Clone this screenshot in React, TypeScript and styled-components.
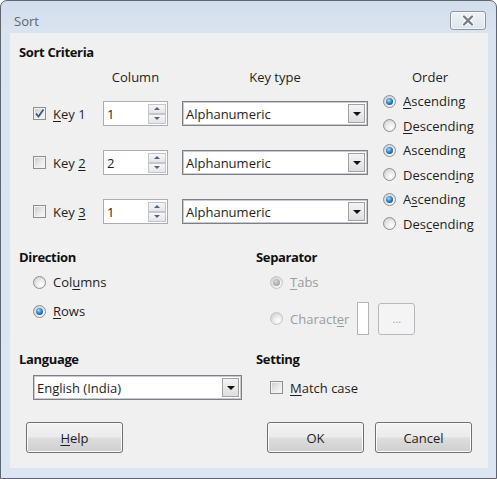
import React from 'react';
import styled, { createGlobalStyle, css } from 'styled-components';

const GlobalStyle = createGlobalStyle`
  html, body {
    margin: 0;
    padding: 0;
    background: #ffffff;
  }
  body {
    font-family: "Open Sans", "Liberation Sans", sans-serif;
    font-size: 13px;
    color: #1e1e1e;
  }
  * {
    box-sizing: border-box;
  }
`;

const StyledWindow = styled.div`
  width: 497px;
  height: 479px;
  display: flex;
  flex-direction: column;
  padding: 0 8px 10px 9px;
  border: 1px solid #5e6470;
  border-radius: 7px 7px 0 0;
  background: linear-gradient(#d2dded 0px, #dae4f0 30px, #dce6f2 100%);
  overflow: hidden;
`;

const StyledTitleBar = styled.div`
  height: 32px;
  flex: none;
  display: flex;
  justify-content: space-between;
  align-items: flex-start;
`;

const StyledTitle = styled.div`
  margin: 11px 0 0 4px;
  line-height: 18px;
  color: #5b6470;
`;

const StyledClose = styled.div`
  width: 36px;
  height: 19px;
  margin: 10px 2px 0 0;
  display: flex;
  align-items: center;
  justify-content: center;
  border: 1px solid #8d96a2;
  border-radius: 3px;
  background: linear-gradient(#edf2f7, #dde5ee);
  box-shadow: inset 0 0 0 1px rgba(255, 255, 255, 0.6);
`;

const StyledClient = styled.div`
  flex: 1;
  background: #f0f0f0;
  padding: 10px 0 0 9px;
`;

const StyledHeading = styled.div`
  font-weight: 700;
  line-height: 18px;
  letter-spacing: -0.35px;
  color: #111;
`;

const rowColumns = css`
  display: grid;
  grid-template-columns: 56px 65px 186px 96px;
  column-gap: 14px;
  align-items: center;
`;

const StyledCriteria = styled.div`
  margin: 7px 0 0 14px;
`;

const StyledHeaderRow = styled.div`
  ${rowColumns};
  height: 18px;
  margin-bottom: 3px;
  line-height: 18px;
`;

const StyledHeaderCell = styled.div<{ $col: number }>`
  grid-column: ${props => props.$col};
  text-align: center;
`;

const StyledKeyRow = styled.div`
  ${rowColumns};
  height: 49px;
`;

const StyledCheckLine = styled.label<{ $disabled?: boolean }>`
  display: flex;
  align-items: center;
  gap: 7px;
  white-space: nowrap;
  line-height: 18px;
  color: ${props => props.$disabled ? '#9c9c9c' : '#1e1e1e'};
`;

const StyledCheckbox = styled.span`
  width: 13px;
  height: 13px;
  flex: none;
  display: flex;
  align-items: center;
  justify-content: center;
  border: 1px solid #8e8f8f;
  background: linear-gradient(135deg, #c9c9c9, #ececec 60%, #f8f8f8);
  box-shadow: inset 0 0 0 1px #f2f2f2;
`;

const StyledRadio = styled.span<{ $checked: boolean; $disabled?: boolean }>`
  position: relative;
  width: 13px;
  height: 13px;
  flex: none;
  border-radius: 50%;
  border: 1px solid ${props => props.$disabled ? '#c4c4c4' : '#8c8e91'};
  background: radial-gradient(circle at 65% 70%, #ffffff 0%, #ececec 40%, #c6c6c6 100%);

  &::after {
    content: '';
    display: ${props => props.$checked ? 'block' : 'none'};
    position: absolute;
    inset: 2px;
    border-radius: 50%;
    background: ${props => props.$disabled
      ? 'radial-gradient(circle at 40% 35%, #d6d6d6, #a6a6a6 70%, #9a9a9a)'
      : 'radial-gradient(circle at 40% 35%, #a9dcff 0%, #3b8fd2 40%, #0f4a82 85%)'};
  }
`;

const StyledSpin = styled.div`
  width: 65px;
  height: 25px;
  display: flex;
  align-items: center;
  border: 1px solid #abadb3;
  background: #ffffff;
  padding: 0 1px 0 3px;
`;

const StyledSpinText = styled.span`
  flex: 1;
  line-height: 18px;
`;

const StyledSpinButtons = styled.div`
  display: flex;
  flex-direction: column;
  width: 18px;
`;

const StyledSpinButton = styled.span<{ $down?: boolean }>`
  height: 10px;
  display: flex;
  align-items: center;
  justify-content: center;
  border: 1px solid #c3c7cd;
  background: linear-gradient(#f7f7f7, #e3e5e8);

  &::after {
    content: '';
    border-left: 3px solid transparent;
    border-right: 3px solid transparent;
    ${props => props.$down
      ? 'border-top: 3px solid #55627a;'
      : 'border-bottom: 3px solid #55627a;'}
  }
`;

const StyledCombo = styled.div<{ $width: number }>`
  width: ${props => props.$width}px;
  height: 25px;
  display: flex;
  align-items: center;
  padding: 0 1px 0 3px;
  border: 1px solid #7c7f85;
  background: #ffffff;
  box-shadow: inset 0 0 0 1px #c9cbcf;
`;

const StyledComboText = styled.span`
  flex: 1;
  line-height: 18px;
`;

const StyledDropButton = styled.span`
  width: 17px;
  height: 19px;
  margin-right: 1px;
  display: flex;
  align-items: center;
  justify-content: center;
  border: 1px solid #9fa2a7;
  background: linear-gradient(#f4f4f4, #dedede);

  &::after {
    content: '';
    border-left: 4px solid transparent;
    border-right: 4px solid transparent;
    border-top: 4px solid #111;
  }
`;

const StyledOrder = styled.div`
  display: flex;
  flex-direction: column;
  padding-left: 1px;
`;

const StyledRadioLine = styled.label<{ $height: number; $disabled?: boolean }>`
  height: ${props => props.$height}px;
  display: flex;
  align-items: center;
  gap: 7px;
  white-space: nowrap;
  line-height: 18px;
  color: ${props => props.$disabled ? '#9c9c9c' : '#1e1e1e'};
`;

const StyledLower = styled.div`
  margin-top: 12px;
  display: grid;
  grid-template-columns: 237px 1fr;
  row-gap: 15px;
  align-items: start;
`;

const StyledOptionList = styled.div<{ $gap: number }>`
  display: flex;
  flex-direction: column;
  gap: ${props => props.$gap}px;
  margin: 4px 0 0 14px;
`;

const StyledCharacterRow = styled.div`
  display: flex;
  align-items: center;
  height: 33px;
`;

const StyledCharBox = styled.span`
  width: 12px;
  height: 33px;
  margin: 0 9px 0 8px;
  border: 1px solid #b4b4b4;
  background: #ffffff;
`;

const StyledSmallButton = styled.span`
  width: 37px;
  height: 32px;
  display: flex;
  align-items: center;
  justify-content: center;
  border: 1px solid #b5b8bc;
  border-radius: 3px;
  background: #f4f4f4;
  color: #a2a2a2;
  font-size: 11px;
`;

const StyledIndented = styled.div`
  margin: 7px 0 0 14px;
`;

const StyledSettingLine = styled.div`
  margin: 7px 0 0 14px;
  height: 25px;
  display: flex;
  align-items: center;
`;

const StyledButtonRow = styled.div`
  margin-top: 22px;
  display: flex;
  justify-content: space-between;
  padding: 0 16px 0 7px;
`;

const StyledButtonGroup = styled.div`
  display: flex;
  gap: 11px;
`;

const StyledButton = styled.button`
  width: 97px;
  height: 31px;
  padding: 0;
  border: 1px solid #707070;
  border-radius: 3px;
  background: linear-gradient(#f2f2f2 0%, #ebebeb 48%, #dddddd 52%, #cfcfcf 100%);
  box-shadow: inset 0 0 0 1px #fbfbfb;
  font-family: inherit;
  font-size: 13px;
  color: #1e1e1e;
`;

const StyledMnemonic = styled.u`
  text-decoration-thickness: 1px;
  text-underline-offset: 2px;
`;

const Mnemonic: React.FC<{ text: string; at: number }> = ({ text, at }) => (
  <span>
    {text.slice(0, at)}
    <StyledMnemonic>{text[at]}</StyledMnemonic>
    {text.slice(at + 1)}
  </span>
);

const Checkbox: React.FC<{ checked?: boolean }> = ({ checked }) => (
  <StyledCheckbox>
    {checked && (
      <svg width="11" height="11" viewBox="0 0 11 11">
        <path d="M2 5.5 L4.5 8.5 L9.5 1.5" fill="none" stroke="#3d5688" strokeWidth="1.8" />
      </svg>
    )}
  </StyledCheckbox>
);

type SortKey = {
  label: number;
  value: string;
  enabled: boolean;
  asc: number;
  desc: number;
};

const SORT_KEYS: SortKey[] = [
  { label: 0, value: '1', enabled: true, asc: 0, desc: 0 },
  { label: 4, value: '2', enabled: false, asc: 8, desc: 7 },
  { label: 4, value: '1', enabled: false, asc: 1, desc: 3 },
];

const App: React.FC = () => {
  return (<>
    <GlobalStyle />
    <StyledWindow>
      <StyledTitleBar>
        <StyledTitle>Sort</StyledTitle>
        <StyledClose>
          <svg width="14" height="11" viewBox="0 0 14 11">
            <path d="M3 1.5 L11 9.5 M11 1.5 L3 9.5" stroke="#ffffff" strokeWidth="4.5" strokeLinecap="round" />
            <path d="M3 1.5 L11 9.5 M11 1.5 L3 9.5" stroke="#767d86" strokeWidth="2.4" strokeLinecap="round" />
          </svg>
        </StyledClose>
      </StyledTitleBar>

      <StyledClient>
        <StyledHeading>Sort Criteria</StyledHeading>
        <StyledCriteria>
          <StyledHeaderRow>
            <StyledHeaderCell $col={2}>Column</StyledHeaderCell>
            <StyledHeaderCell $col={3}>Key type</StyledHeaderCell>
            <StyledHeaderCell $col={4}>Order</StyledHeaderCell>
          </StyledHeaderRow>
          {SORT_KEYS.map((item, index) => (
            <StyledKeyRow key={index}>
              <StyledCheckLine>
                <Checkbox checked={item.enabled} />
                <Mnemonic text={`Key ${index + 1}`} at={item.label} />
              </StyledCheckLine>
              <StyledSpin>
                <StyledSpinText>{item.value}</StyledSpinText>
                <StyledSpinButtons>
                  <StyledSpinButton />
                  <StyledSpinButton $down />
                </StyledSpinButtons>
              </StyledSpin>
              <StyledCombo $width={186}>
                <StyledComboText>Alphanumeric</StyledComboText>
                <StyledDropButton />
              </StyledCombo>
              <StyledOrder>
                <StyledRadioLine $height={24.5}>
                  <StyledRadio $checked />
                  <Mnemonic text="Ascending" at={item.asc} />
                </StyledRadioLine>
                <StyledRadioLine $height={24.5}>
                  <StyledRadio $checked={false} />
                  <Mnemonic text="Descending" at={item.desc} />
                </StyledRadioLine>
              </StyledOrder>
            </StyledKeyRow>
          ))}
        </StyledCriteria>

        <StyledLower>
          <div>
            <StyledHeading>Direction</StyledHeading>
            <StyledOptionList $gap={5}>
              <StyledRadioLine $height={24}>
                <StyledRadio $checked={false} />
                <Mnemonic text="Columns" at={3} />
              </StyledRadioLine>
              <StyledRadioLine $height={24}>
                <StyledRadio $checked />
                <Mnemonic text="Rows" at={0} />
              </StyledRadioLine>
            </StyledOptionList>
          </div>
          <div>
            <StyledHeading>Separator</StyledHeading>
            <StyledOptionList $gap={8}>
              <StyledRadioLine $height={24} $disabled>
                <StyledRadio $checked $disabled />
                <Mnemonic text="Tabs" at={0} />
              </StyledRadioLine>
              <StyledCharacterRow>
                <StyledRadioLine $height={33} $disabled>
                  <StyledRadio $checked={false} $disabled />
                  <Mnemonic text="Character" at={7} />
                </StyledRadioLine>
                <StyledCharBox />
                <StyledSmallButton>...</StyledSmallButton>
              </StyledCharacterRow>
            </StyledOptionList>
          </div>
          <div>
            <StyledHeading>Language</StyledHeading>
            <StyledIndented>
              <StyledCombo $width={209}>
                <StyledComboText>English (India)</StyledComboText>
                <StyledDropButton />
              </StyledCombo>
            </StyledIndented>
          </div>
          <div>
            <StyledHeading>Setting</StyledHeading>
            <StyledSettingLine>
              <StyledCheckLine>
                <Checkbox />
                <Mnemonic text="Match case" at={0} />
              </StyledCheckLine>
            </StyledSettingLine>
          </div>
        </StyledLower>

        <StyledButtonRow>
          <StyledButton><Mnemonic text="Help" at={0} /></StyledButton>
          <StyledButtonGroup>
            <StyledButton>OK</StyledButton>
            <StyledButton>Cancel</StyledButton>
          </StyledButtonGroup>
        </StyledButtonRow>
      </StyledClient>
    </StyledWindow>
  </>);
};

export default App;
